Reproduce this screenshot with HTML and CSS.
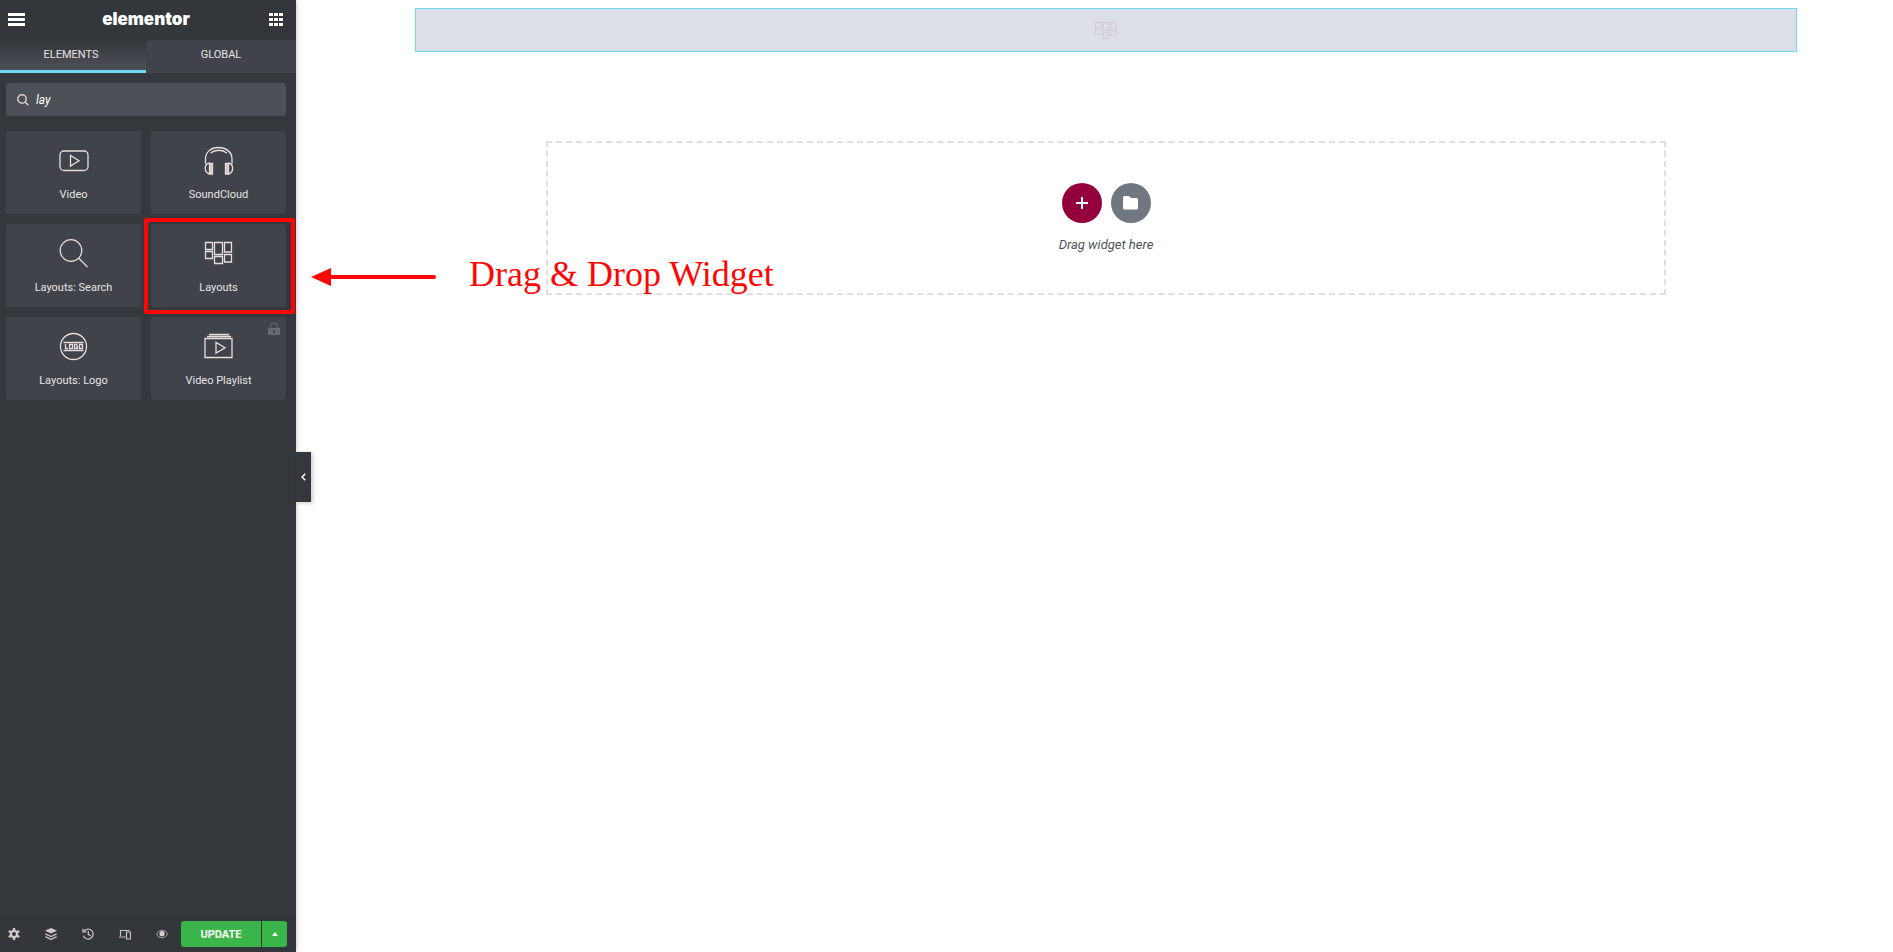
FILE: index.html
```html
<!DOCTYPE html>
<html lang="en">
<head>
<meta charset="utf-8">
<title>Elementor</title>
<link rel="stylesheet" href="styles.css">
</head>
<body>
<aside class="panel">
  <header class="panel-header">
    <button class="icon-button" type="button" aria-label="Menu">
      <svg width="17" height="14" viewBox="0 0 17 14" fill="#fff"><path d="M0 0h17v3H0zM0 5h17v3H0zM0 10h17v3H0z"/></svg>
    </button>
    <span class="brand">elementor</span>
    <button class="icon-button" type="button" aria-label="Widgets">
      <svg width="14" height="14" viewBox="0 0 14 14" fill="#fff"><path d="M0 0h4v3H0zM5 0h4v3H5zM10 0h4v3h-4zM0 5h4v3H0zM5 5h4v3H5zM10 5h4v3h-4zM0 10h4v3H0zM5 10h4v3H5zM10 10h4v3h-4z"/></svg>
    </button>
  </header>
  <nav class="tabs">
    <button class="tab tab-active" type="button">ELEMENTS</button>
    <button class="tab" type="button">GLOBAL</button>
  </nav>
  <div class="panel-body">
    <label class="search">
      <svg width="12" height="12" viewBox="0 0 12 12" fill="none" stroke="#d8cccf" stroke-width="1.5"><circle cx="5" cy="5" r="4.2"/><path d="M8 8l3.300 3.300"/></svg>
      <input class="search-input" type="text" value="lay" aria-label="Search widget">
    </label>
    <div class="widgets">
      <button class="widget" type="button">
        <svg class="widget-icon" viewBox="0 0 28 28"><rect x="0" y="4" width="28" height="19.500" rx="4"/><path d="M10.500 8.500v10.500l8.500-5.250z"/></svg>
        <span>Video</span>
      </button>
      <button class="widget" type="button">
        <svg class="widget-icon" viewBox="0 0 28 28"><path d="M.5 17V12C.5 5 6 .5 13.500 .5S27 5 27 12v5"/><path d="M5.500 6C10 2.300 17.500 2.300 22 6"/><path class="solid" d="M4.500 16.500h3v10.500h-3zM20.500 16.500h3v10.500h-3z"/><path d="M4.500 16C-1.200 17-1.200 25.500 4.500 27M23.500 16c5.500 1 5.500 9.500 0 11"/></svg>
        <span>SoundCloud</span>
      </button>
      <button class="widget" type="button">
        <svg class="widget-icon" viewBox="0 0 28 28"><circle cx="11" cy="10.500" r="10.800"/><path d="M18.500 18l9 9"/></svg>
        <span>Layouts: Search</span>
      </button>
      <div class="widget-slot">
        <button class="widget" type="button">
          <svg class="widget-icon" viewBox="0 0 28 28"><path d="M.5 2.500h7v7h-7zM.5 11.500h7v7h-7zM9.500 2.500h8v12h-8zM9.500 16.500h8v7h-8zM19.500 2.500h7v9.500h-7zM19.500 14.500h7v7.500h-7z"/></svg>
          <span>Layouts</span>
        </button>
        <div class="highlight"></div>
      </div>
      <button class="widget" type="button">
        <svg class="widget-icon" viewBox="0 0 28 28"><circle cx="13.500" cy="13.500" r="13"/><path d="M3.500 9.500h20M3.500 17.500h20"/><path d="M5.500 11v4.500h2.500M9.500 11.500h3v4h-3zM17.500 11.500h-3v4h3v-2h-1.500M19.500 11.500h3v4h-3z"/></svg>
        <span>Layouts: Logo</span>
      </button>
      <button class="widget" type="button">
        <svg class="lock" width="14" height="14" viewBox="0 0 14 14"><path d="M3.500 6V4.500C3.500 0 10.500 0 10.500 4.500V6" fill="none" stroke="#5d6168" stroke-width="1.500"/><path d="M1 6h12v7H1z" fill="#686b71"/><path d="M7 8v3" stroke="#404349" stroke-width="2"/></svg>
        <svg class="widget-icon" viewBox="0 0 28 28"><path d="M4 1.500h20M2 3.500h24M0 5.500h27v19H0zM11 9.500v10.500l9-5.250z"/></svg>
        <span>Video Playlist</span>
      </button>
    </div>
  </div>
  <footer class="panel-footer">
    <div class="tools">
      <button class="icon-button" type="button" aria-label="Settings">
        <svg width="12" height="12" viewBox="0 0 12 12"><circle cx="6" cy="6" r="3.100" fill="none" stroke="#d3c9cc" stroke-width="2.200"/><path d="M6 0v2.500M6 9.500V12M.8 3l2.100 1.200M9.100 7.800L11.200 9M.8 9l2.100-1.200M9.100 4.200L11.200 3" stroke="#d3c9cc" stroke-width="2.400"/></svg>
      </button>
      <button class="icon-button" type="button" aria-label="Navigator">
        <svg width="12" height="12" viewBox="0 0 12 12"><path d="M6 0l6 2.800-6 2.800L0 2.800z" fill="#d3c9cc"/><path d="M.3 5.800L6 8.500l5.700-2.700M.3 8.700L6 11.400l5.700-2.700" fill="none" stroke="#c4c2c6" stroke-width="1.300"/></svg>
      </button>
      <button class="icon-button" type="button" aria-label="History">
        <svg width="12" height="12" viewBox="0 0 12 12" fill="none" stroke="#c9c3c7" stroke-width="1.300"><path d="M2 3.200a5 5 0 1 1-.6 4.500M6.300 3v3.300l2.200 1.300"/><path d="M1 .8v3h3.200"/></svg>
      </button>
      <button class="icon-button" type="button" aria-label="Responsive mode">
        <svg width="12" height="12" viewBox="0 0 12 12" fill="none" stroke="#c9c3c7" stroke-width="1.200"><path d="M1.500 8V2.500h9M0 9h6.500M7.500 4h4v7h-4z"/></svg>
      </button>
      <button class="icon-button" type="button" aria-label="Preview">
        <svg width="12" height="12" viewBox="0 0 12 12"><path d="M.5 6C3 1 9 1 11.500 6 9 11 3 11 .5 6z" fill="none" stroke="#a5a8ac"/><circle cx="6" cy="5.700" r="2.600" fill="#dccfd2"/></svg>
      </button>
    </div>
    <div class="publish">
      <button class="update" type="button">UPDATE</button>
      <button class="update-more" type="button" aria-label="Save options">
        <svg width="6" height="4" viewBox="0 0 6 4" fill="#fff"><path d="M3 0l3 4H0z"/></svg>
      </button>
    </div>
  </footer>
  <button class="collapse" type="button" aria-label="Hide panel">
    <svg width="5" height="8" viewBox="0 0 5 8" fill="none" stroke="#fff" stroke-width="1.500"><path d="M4.300.7L1 4l3.300 3.300"/></svg>
  </button>
</aside>
<main class="preview">
  <section class="drop-preview">
    <svg width="22" height="18" viewBox="0 0 22 18" fill="none" stroke="#c4b6bc" stroke-dasharray="1 1"><path d="M.5 1.500h6v5h-6zM.5 8.500h6v5h-6zM8.500 1.500h5v8h-5zM8.500 11.500h5v6h-5zM15.500 1.500h6v6h-6zM15.500 9.500h6v5h-6z"/></svg>
  </section>
  <section class="add-section">
    <div class="add-buttons">
      <button class="round add" type="button" aria-label="Add new section">
        <svg width="14" height="14" viewBox="0 0 14 14" stroke="#fff" stroke-width="2"><path d="M7 1v12M1 7h12"/></svg>
      </button>
      <button class="round folder" type="button" aria-label="Add template">
        <svg width="16" height="14" viewBox="0 0 16 14" fill="#fff"><path d="M1.500 0h4.500l2 2H13.500a1.500 1.500 0 0 1 1.500 1.500V12a1.500 1.500 0 0 1-1.500 1.500H1.500A1.500 1.500 0 0 1 0 12V1.500A1.500 1.500 0 0 1 1.500 0z"/></svg>
      </button>
    </div>
    <p class="add-text">Drag widget here</p>
  </section>
</main>
<div class="note">
  <svg width="126" height="18" viewBox="0 0 126 18"><path d="M18 9h105" stroke="#ff0606" stroke-width="4" stroke-linecap="round"/><path d="M0 9L20 0v18z" fill="#ff0606"/></svg>
  <span class="note-text">Drag &amp; Drop Widget</span>
</div>
</body>
</html>
```
FILE: styles.css
```css
* {
  box-sizing: border-box;
}

body {
  display: flex;
  min-height: 100vh;
  margin: 0;
  background: #fff;
  font-family: Roboto, "Liberation Sans", sans-serif;
}

button {
  padding: 0;
  border: 0;
  background: none;
  color: inherit;
  font: inherit;
}

svg {
  display: block;
  flex-shrink: 0;
}

.panel {
  position: relative;
  display: flex;
  flex: none;
  flex-direction: column;
  width: 296px;
  background: #34383c;
  color: #e6e4e6;
  box-shadow: 1px 0 4px rgba(0, 0, 0, 0.2);
}

.panel-header {
  display: flex;
  align-items: center;
  justify-content: space-between;
  height: 40px;
  padding: 0 13px 0 8px;
  background: #33363b;
}

.brand {
  padding: 0 2px 2px 0;
  color: #fff;
  font-family: Inter, sans-serif;
  font-size: 17px;
  font-weight: 900;
  line-height: 20px;
}

.tabs {
  display: grid;
  grid-template-columns: 146px 1fr;
  height: 33px;
  font-size: 11px;
}

.tab {
  padding-bottom: 5px;
  border-radius: 3px 0 0 0;
  background: #404349;
}

.tab-active {
  padding: 0 4px 2px 0;
  border-bottom: 3px solid #71d7f7;
  border-radius: 0;
  background: linear-gradient(#33363b, #4d5056);
}

.panel-body {
  flex: 1;
  padding: 10px 10px 10px 6px;
}

.search {
  display: flex;
  align-items: center;
  gap: 7px;
  height: 33px;
  margin-bottom: 15px;
  padding: 0 11px;
  border-radius: 3px;
  background: #4d5056;
}

.search-input {
  flex: 1;
  min-width: 0;
  padding: 0;
  border: 0;
  outline: 0;
  background: none;
  color: #fff;
  font: italic 12px Roboto, sans-serif;
}

.widgets {
  display: grid;
  grid-template-columns: 1fr 1fr;
  gap: 10px;
}

.widget-slot {
  position: relative;
  display: grid;
}

.widget {
  position: relative;
  display: flex;
  flex-direction: column;
  align-items: center;
  gap: 12px;
  padding: 16px 4px 11px;
  border-radius: 3px;
  background: #404349;
  font-size: 11px;
  line-height: 16px;
}

.widget-icon {
  width: 28px;
  height: 28px;
  overflow: visible;
  fill: none;
  stroke: #e6dde0;
  stroke-width: 1.3;
}

.widget-icon .solid {
  fill: #d3bfc2;
}

.lock {
  position: absolute;
  top: 5px;
  right: 5px;
}

.highlight {
  position: absolute;
  inset: -6px -9px -7px -7px;
  border: 4px solid #ff0606;
  border-radius: 2px;
  pointer-events: none;
}

.panel-footer {
  display: flex;
  align-items: center;
  justify-content: space-between;
  height: 38px;
  padding: 2px 9px 0 8px;
  background: #33363b;
}

.tools {
  display: flex;
  gap: 25px;
}

.publish {
  display: flex;
  gap: 1px;
  height: 26px;
  color: #fff;
}

.update {
  width: 80px;
  border-radius: 3px 0 0 3px;
  background: #39b54a;
  font-size: 11px;
  font-weight: 700;
}

.update-more {
  display: grid;
  place-items: center;
  width: 25px;
  border-radius: 0 3px 3px 0;
  background: #39b54a;
}

.collapse {
  position: absolute;
  top: 452px;
  left: 100%;
  display: grid;
  place-items: center;
  width: 15px;
  height: 50px;
  background: #34383c;
  box-shadow: 2px 1px 4px rgba(0, 0, 0, 0.2);
}

.preview {
  flex: 1;
  padding: 8px 96px 0 119px;
}

.drop-preview {
  display: grid;
  place-items: center;
  height: 44px;
  border: 1px solid #71d7f7;
  background: #dcdfe5;
}

.add-section {
  display: flex;
  flex-direction: column;
  align-items: center;
  gap: 12px;
  max-width: 1120px;
  margin: 89px auto 0;
  padding: 40px 0 38px;
  border: 2px dashed #dcdfe5;
}

.add-buttons {
  display: flex;
  gap: 9px;
}

.round {
  display: grid;
  place-items: center;
  width: 40px;
  height: 40px;
  border-radius: 50%;
}

.add {
  background: #93003c;
}

.folder {
  background: #717780;
}

.add-text {
  margin: 0;
  color: #4d535a;
  font: italic 13px/20px Roboto, sans-serif;
}

.note {
  position: absolute;
  top: 253px;
  left: 311px;
  display: flex;
  align-items: center;
  gap: 32px;
  color: #ff0606;
  font: 36px/42px "Liberation Serif", serif;
  white-space: nowrap;
}

.note-text {
  padding-bottom: 5px;
}
```
